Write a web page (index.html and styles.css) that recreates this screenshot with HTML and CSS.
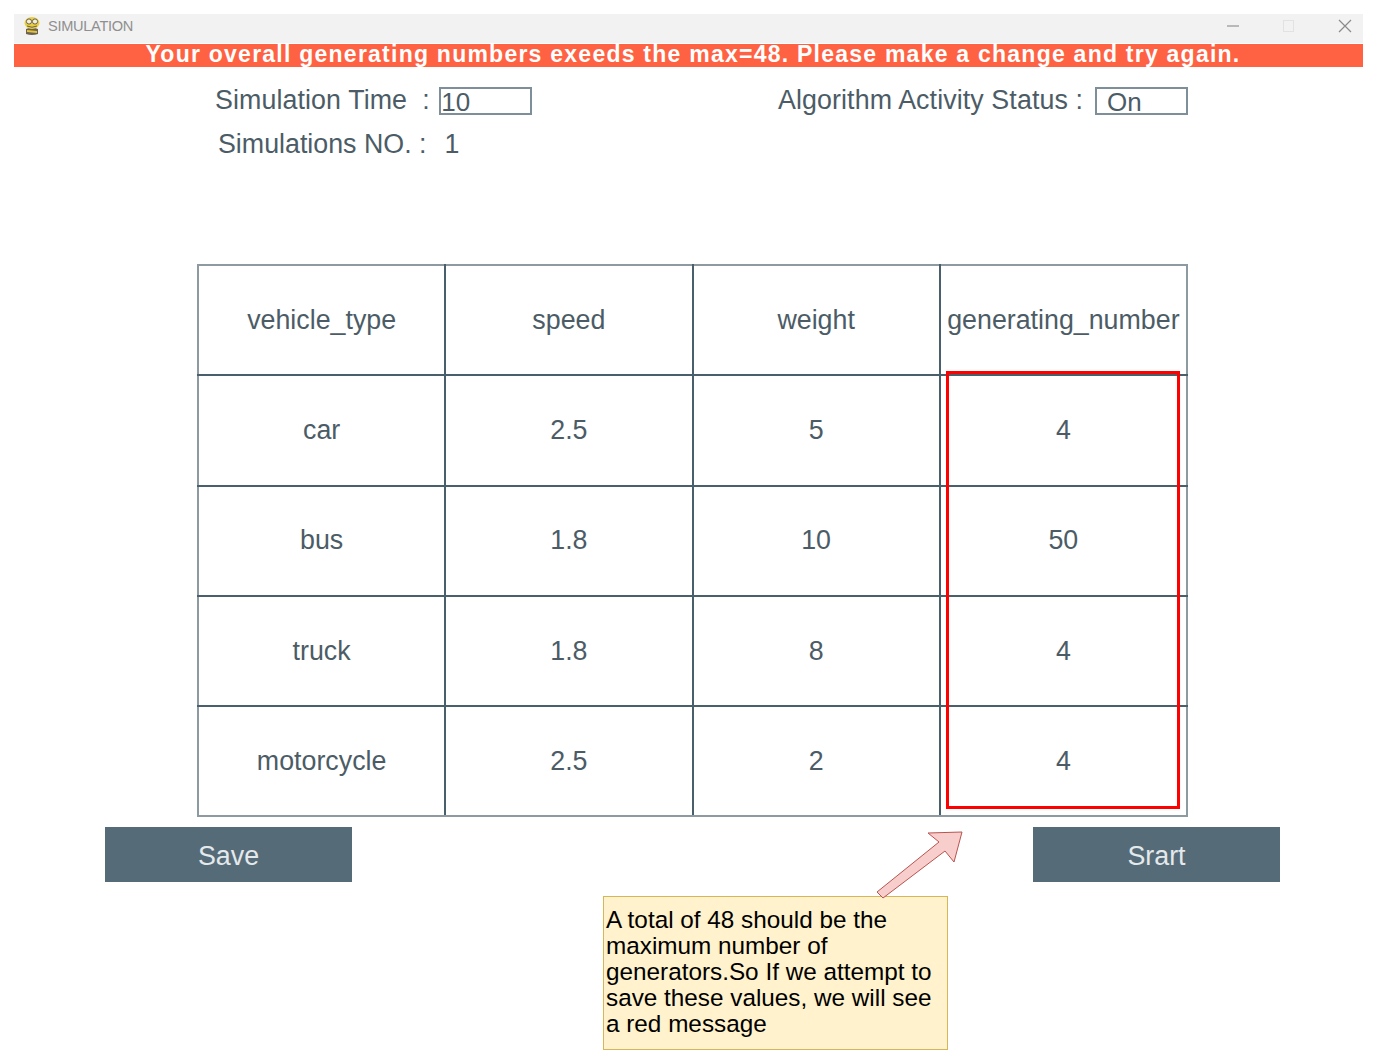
FILE: index.html
```html
<!DOCTYPE html>
<html lang="en">

<head>
    <meta charset="UTF-8">
    <meta name="viewport" content="width=device-width, initial-scale=1.0">
    <title>SIMULATION</title>
    <link rel="stylesheet" href="styles.css">
</head>

<body>

    <div class="window">
        <div class="titlebar">
            <svg class="app-icon" width="18" height="20" viewBox="1 0 16 20">
                <path d="M3 13 Q9 10 15 13 L15 18 Q9 20 3 18 Z" fill="#6b6250" />
                <path d="M4 14 L14 15 L14 17 L4 16 Z" fill="#e5c33a" />
                <ellipse cx="9" cy="7" rx="7.5" ry="6" fill="#e9cf3f" />
                <circle cx="6" cy="5.5" r="2.6" fill="#f4f0d8" stroke="#6b6250" />
                <circle cx="12" cy="5.5" r="2.6" fill="#f4f0d8" stroke="#6b6250" />
                <path d="M4 10 Q9 12.5 14 10" fill="none" stroke="#6b6250" />
            </svg>
            <span class="app-title">SIMULATION</span>
            <div class="win-buttons">
                <svg width="14" height="14" viewBox="0 0 14 14">
                    <path d="M1 7 H13" stroke="#9a9a9a" stroke-width="1.3" />
                </svg>
                <svg width="14" height="14" viewBox="0 0 14 14">
                    <rect x="1.5" y="1.5" width="10" height="11" fill="none" stroke="#e2e2e2" />
                </svg>
                <svg width="14" height="14" viewBox="0 0 14 14">
                    <path d="M1 1 L13 13 M13 1 L1 13" stroke="#8a8a8a" stroke-width="1.2" />
                </svg>
            </div>
        </div>

        <div class="banner">Your overall generating numbers exeeds the max=48. Please make a change and try again.</div>

        <div class="settings">
            <div class="field time-field">
                <label class="time-label">Simulation Time</label>
                <span class="colon">:</span>
                <input class="value-box" type="text" value="10">
            </div>
            <div class="field status-field">
                <label class="status-label">Algorithm Activity Status :</label>
                <input class="value-box status-box" type="text" value="On">
            </div>
        </div>
        <div class="field count-field">
            <span>Simulations NO. :</span>
            <span class="count">1</span>
        </div>

        <table class="vehicles">
            <thead>
                <tr>
                    <th>vehicle_type</th>
                    <th>speed</th>
                    <th>weight</th>
                    <th>generating_number</th>
                </tr>
            </thead>
            <tbody>
                <tr>
                    <td>car</td>
                    <td>2.5</td>
                    <td>5</td>
                    <td>4</td>
                </tr>
                <tr>
                    <td>bus</td>
                    <td>1.8</td>
                    <td>10</td>
                    <td>50</td>
                </tr>
                <tr>
                    <td>truck</td>
                    <td>1.8</td>
                    <td>8</td>
                    <td>4</td>
                </tr>
                <tr>
                    <td>motorcycle</td>
                    <td>2.5</td>
                    <td>2</td>
                    <td>4</td>
                </tr>
            </tbody>
        </table>

        <div class="actions">
            <button>Save</button>
            <button>Srart</button>
        </div>
    </div>

    <!-- annotations on top of the screenshot -->
    <div class="highlight"></div>
    <div class="note">A total of 48 should be the maximum number of generators.So If we attempt to save these values, we will see a red message</div>
    <svg class="arrow" width="90" height="70" viewBox="0 0 90 70">
        <path d="M2 61 L64 11 L53 2 L87 1 L79 31 L70 20 L8 67 Z" fill="#f8cecc" stroke="#b85450" stroke-width="1" />
    </svg>

</body>

</html>
```

FILE: styles.css
```css
body {
    font-family: 'Liberation Sans', Arial, sans-serif;
    background-color: #fff;
    color: #4c5c66;
    margin: 0;
    padding: 14px 16px 0 14px;
    height: 1049px;
    overflow: hidden;
    position: relative;
}

.titlebar {
    display: flex;
    align-items: center;
    box-sizing: border-box;
    height: 30px;
    background-color: #f2f2f2;
    padding: 0 0 6px 9px;
    border-bottom: 1px solid #fff;
}

.app-title {
    margin-left: 7px;
    font-size: 14.6px;
    color: #8f8f8f;
    letter-spacing: -0.3px;
}

.win-buttons {
    margin-left: auto;
    margin-right: 11px;
    display: flex;
    gap: 42px;
}

.banner {
    height: 23px;
    line-height: 20px;
    padding-left: 9px;
    background-color: #ff6242;
    color: #fff;
    font-size: 23px;
    font-weight: bold;
    text-align: center;
    letter-spacing: 1.24px;
    white-space: nowrap;
}

.settings {
    display: flex;
    padding: 20px 0 0 201px;
}

.field {
    display: flex;
    align-items: center;
    font-size: 26.8px;
    height: 28px;
}

.time-label,
.status-label,
.colon {
    position: relative;
    top: -1px;
    letter-spacing: 0.1px;
}

.colon {
    margin-left: 15px;
}

.value-box {
    font-family: inherit;
    font-size: 26px;
    color: #4c5c66;
    background: #fff;
    border: 2px solid #7f8f99;
    width: 93px;
    height: 28px;
    padding: 2px 0 0 0;
    margin: 0 0 0 9.5px;
    box-sizing: border-box;
    outline: none;
}

.time-field {
    width: 563px;
    white-space: nowrap;
}

.status-box {
    padding-left: 10px;
    margin-left: 12px;
}

.count-field {
    margin: 15px 0 0 204px;
}

.count {
    margin-left: 18px;
}

.vehicles {
    border-collapse: collapse;
    table-layout: fixed;
    width: 991px;
    margin: 106px 0 0 183px;
}

.vehicles th,
.vehicles td {
    border: 2px solid #4a5f6c;
    height: 108.3px;
    padding: 0;
    font-size: 26.8px;
    font-weight: normal;
    text-align: center;
}

.vehicles th {
    border-top-color: #8d9aa2;
}

.vehicles td:first-child,
.vehicles th:first-child {
    border-left-color: #8d9aa2;
}

.vehicles td:last-child,
.vehicles th:last-child {
    border-right-color: #8d9aa2;
}

.vehicles tbody tr:last-child td {
    border-bottom-color: #8d9aa2;
}

.actions {
    display: flex;
    justify-content: space-between;
    margin: 10px 83px 0 91px;
}

.actions button {
    font-family: inherit;
    width: 247px;
    height: 55px;
    padding: 3px 0 0 0;
    font-size: 26.8px;
    background-color: #566b78;
    color: #e4e9ec;
    border: none;
}

.highlight {
    position: absolute;
    left: 946px;
    top: 371px;
    width: 228px;
    height: 432px;
    border: 3px solid #ff0000;
}

.arrow {
    position: absolute;
    left: 875px;
    top: 831px;
}

.note {
    position: absolute;
    left: 603px;
    top: 896px;
    width: 345px;
    height: 154px;
    box-sizing: border-box;
    padding: 10px 1px 0 2px;
    background-color: #fff2cc;
    border: 1px solid #d6b656;
    color: #000;
    font-size: 24.3px;
    line-height: 26px;
}
```
